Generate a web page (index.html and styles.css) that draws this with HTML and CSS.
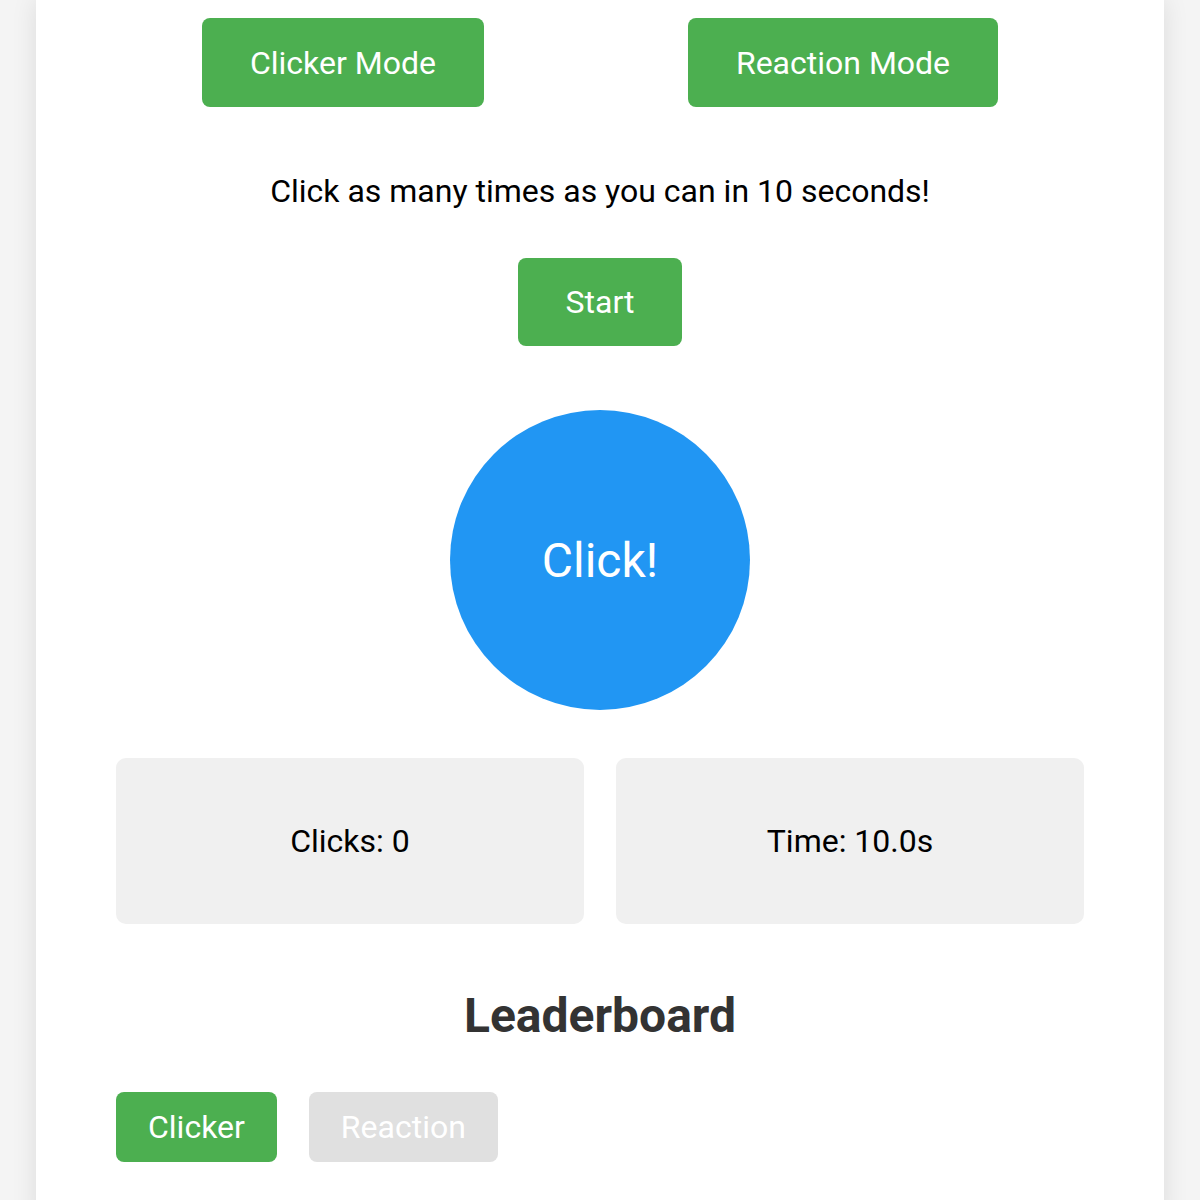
FILE: index.html
```html
<!DOCTYPE html>
<html lang="en">
<head>
  <meta charset="UTF-8" />
  <meta name="viewport" content="width=device-width, initial-scale=1.0"/>
  <title>Click Speed Game</title>
  <link rel="stylesheet" href="styles.css">
</head>
<body>
  <div class="game-container">
    <div class="mode-select">
      <button class="btn mode-btn">Clicker Mode</button>
      <button class="btn mode-btn">Reaction Mode</button>
    </div>

    <!-- Clicker mode -->
    <p class="instructions">Click as many times as you can in 10 seconds!</p>
    <div class="start-row">
      <button class="btn start-btn">Start</button>
    </div>

    <div class="click-area">
      <button class="click-circle">Click!</button>
    </div>

    <div class="stats">
      <div class="stat-box">Clicks: 0</div>
      <div class="stat-box">Time: 10.0s</div>
    </div>

    <!-- Leaderboard -->
    <h2>Leaderboard</h2>
    <div class="tabs">
      <button class="tab active">Clicker</button>
      <button class="tab">Reaction</button>
    </div>
  </div>
</body>
</html>
```

FILE: styles.css
```css
* {
  box-sizing: border-box;
  margin: 0;
  padding: 0;
  font-family: Roboto, "Noto Sans", sans-serif;
}

body {
  background-color: #f4f4f4;
  min-height: 100vh;
}

.game-container {
  background: #fff;
  margin: 0 36px;
  padding: 18px 80px 60px;
  min-height: 1200px;
  box-shadow: 0 0 24px rgba(0,0,0,0.1);
}

.btn {
  background: #4caf50;
  color: #fff;
  border: none;
  border-radius: 8px;
  font-size: 32px;
  cursor: pointer;
}

.mode-select {
  display: flex;
  justify-content: center;
  gap: 204px;
}

.mode-btn {
  height: 89px;
  padding: 0 48px;
}

.instructions {
  text-align: center;
  font-size: 32px;
  line-height: 38px;
  color: #000;
  margin-top: 65px;
}

.start-row {
  display: flex;
  justify-content: center;
  margin-top: 48px;
}

.start-btn {
  width: 164px;
  height: 88px;
}

.click-area {
  display: flex;
  justify-content: center;
  margin-top: 64px;
}

.click-circle {
  width: 300px;
  height: 300px;
  border-radius: 50%;
  border: none;
  background: #2196f3;
  color: #fff;
  font-size: 48px;
  cursor: pointer;
}

.stats {
  display: grid;
  grid-template-columns: 1fr 1fr;
  gap: 32px;
  margin-top: 48px;
}

.stat-box {
  height: 166px;
  background: #f0f0f0;
  border-radius: 10px;
  display: flex;
  justify-content: center;
  align-items: center;
  font-size: 32px;
  color: #000;
}

h2 {
  text-align: center;
  font-size: 48px;
  font-weight: 700;
  color: #333;
  margin-top: 64px;
  line-height: 56px;
}

.tabs {
  display: flex;
  gap: 32px;
  margin-top: 48px;
}

.tab {
  height: 70px;
  padding: 0 32px;
  border: none;
  border-radius: 8px;
  background: #e0e0e0;
  color: #fff;
  font-size: 32px;
  cursor: pointer;
}

.tab.active {
  background: #4caf50;
}
```
